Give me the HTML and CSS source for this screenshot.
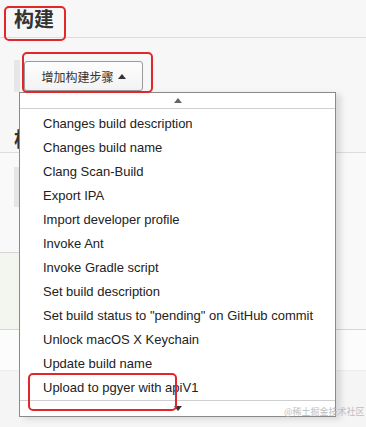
FILE: index.html
```html
<!DOCTYPE html>
<html lang="zh-CN">
<head>
    <meta charset="UTF-8">
    <meta name="viewport" content="width=device-width, initial-scale=1.0">
    <title>构建</title>
    <link rel="stylesheet" href="styles.css">
</head>
<body>
    <div class="page">
        <div class="section-head">
            <h2 class="section-title">构建</h2>
        </div>

        <div class="steps">
            <div class="steps-bar"></div>
            <button class="add-btn">增加构建步骤 <span class="caret-up"></span></button>
        </div>

        <div class="section-head second">
            <h2 class="section-title">构建后操作</h2>
        </div>

        <div class="post-area">
            <div class="grey-box"></div>
            <div class="note-box"></div>
        </div>

        <div class="bottom-bar"></div>
        <div class="footer-area"></div>
    </div>

    <!-- выпадающее меню шагов -->
    <div class="menu">
        <div class="menu-scroll up"><span class="arrow-up"></span></div>
        <ul class="menu-list">
            <li>Changes build description</li>
            <li>Changes build name</li>
            <li>Clang Scan-Build</li>
            <li>Export IPA</li>
            <li>Import developer profile</li>
            <li>Invoke Ant</li>
            <li>Invoke Gradle script</li>
            <li>Set build description</li>
            <li>Set build status to "pending" on GitHub commit</li>
            <li>Unlock macOS X Keychain</li>
            <li>Update build name</li>
            <li>Upload to pgyer with apiV1</li>
        </ul>
        <div class="menu-scroll down"><span class="arrow-down"></span></div>
    </div>

    <!-- пометки -->
    <div class="mark mark-title"></div>
    <div class="mark mark-btn"></div>
    <div class="mark mark-item"></div>

    <div class="watermark">@稀土掘金技术社区</div>
</body>
</html>
```

FILE: styles.css
```css
* {
    margin: 0;
    padding: 0;
    box-sizing: border-box;
}

body {
    background: #f7f7f7;
    font-family: 'Liberation Sans', Arial, 'Noto Sans CJK SC', sans-serif;
    color: #222;
    width: 366px;
    height: 427px;
    overflow: hidden;
}

.page {
    width: 100%;
}

.section-head {
    height: 38px;
    border-bottom: 1px solid #dcdcdc;
    padding: 5px 0 0 14px;
}

.section-head.second {
    margin-top: 30px;
    height: 31px;
    padding-top: 3px;
    background: #f7f7f7;
}

.section-title {
    font-family: 'Noto Sans CJK SC', sans-serif;
    font-size: 20px;
    font-weight: 700;
    line-height: 28px;
    color: #333;
}

.steps {
    display: flex;
    align-items: stretch;
    gap: 4px;
    margin-top: 22px;
    padding-left: 14px;
    height: 32px;
}

.steps-bar {
    width: 6px;
    background: #e6e6e6;
}

.add-btn {
    width: 119px;
    height: 30px;
    margin-top: 1px;
    border: 1px solid #9a9a9a;
    border-radius: 3px;
    background: linear-gradient(#fdfdfd, #f3f3f3);
    font-family: 'Noto Sans CJK SC', sans-serif;
    font-size: 12px;
    color: #333;
    display: flex;
    align-items: center;
    justify-content: center;
    gap: 4px;
}

.caret-up {
    width: 0;
    height: 0;
    border-left: 4px solid transparent;
    border-right: 4px solid transparent;
    border-bottom: 5px solid #333;
}

.post-area {
    background: #f9f9f9;
    height: 176px;
    padding-top: 14px;
}

.grey-box {
    margin-left: 14px;
    width: 160px;
    height: 40px;
    background: #e6e6e6;
}

.note-box {
    margin-top: 45px;
    width: 320px;
    height: 77px;
    border-top: 1px solid #d6d6d6;
    background: #f2f6ef;
}

.bottom-bar {
    height: 41px;
    border-top: 1px solid #d6d6d6;
    background: #fcfcfc;
}

.footer-area {
    height: 60px;
    border-top: 1px solid #ececec;
    background: #f5f5f5;
}

/* menu */
.menu {
    position: absolute;
    left: 19px;
    top: 92px;
    width: 317px;
    background: #fff;
    border: 1px solid #8a8a8a;
    box-shadow: 5px 2px 6px rgba(0, 0, 0, 0.12);
}

.menu-scroll {
    height: 16px;
    display: flex;
    justify-content: center;
    align-items: center;
}

.menu-scroll.up {
    border-bottom: 1px solid #cfcfcf;
}

.menu-scroll.down {
    border-top: 1px solid #cfcfcf;
}

.arrow-up {
    width: 0;
    height: 0;
    border-left: 4px solid transparent;
    border-right: 4px solid transparent;
    border-bottom: 5px solid #666;
}

.arrow-down {
    width: 0;
    height: 0;
    border-left: 4px solid transparent;
    border-right: 4px solid transparent;
    border-top: 5px solid #333;
}

.menu-list {
    list-style: none;
    padding: 3px 0 0;
}

.menu-list li {
    height: 24px;
    line-height: 24px;
    padding-left: 23px;
    font-size: 13px;
    color: #222;
    white-space: nowrap;
}

/* red marks */
.mark {
    position: absolute;
    border: 2px solid #e3262a;
    border-radius: 5px;
}

.mark-title {
    left: 4px;
    top: 6px;
    width: 62px;
    height: 35px;
}

.mark-btn {
    left: 22px;
    top: 52px;
    width: 131px;
    height: 41px;
}

.mark-item {
    left: 28px;
    top: 373px;
    width: 149px;
    height: 38px;
}

.watermark {
    position: absolute;
    left: 284px;
    top: 406px;
    font-family: 'Noto Sans CJK SC', sans-serif;
    font-size: 9px;
    line-height: 12px;
    color: #bdbdbd;
    white-space: nowrap;
}
```
